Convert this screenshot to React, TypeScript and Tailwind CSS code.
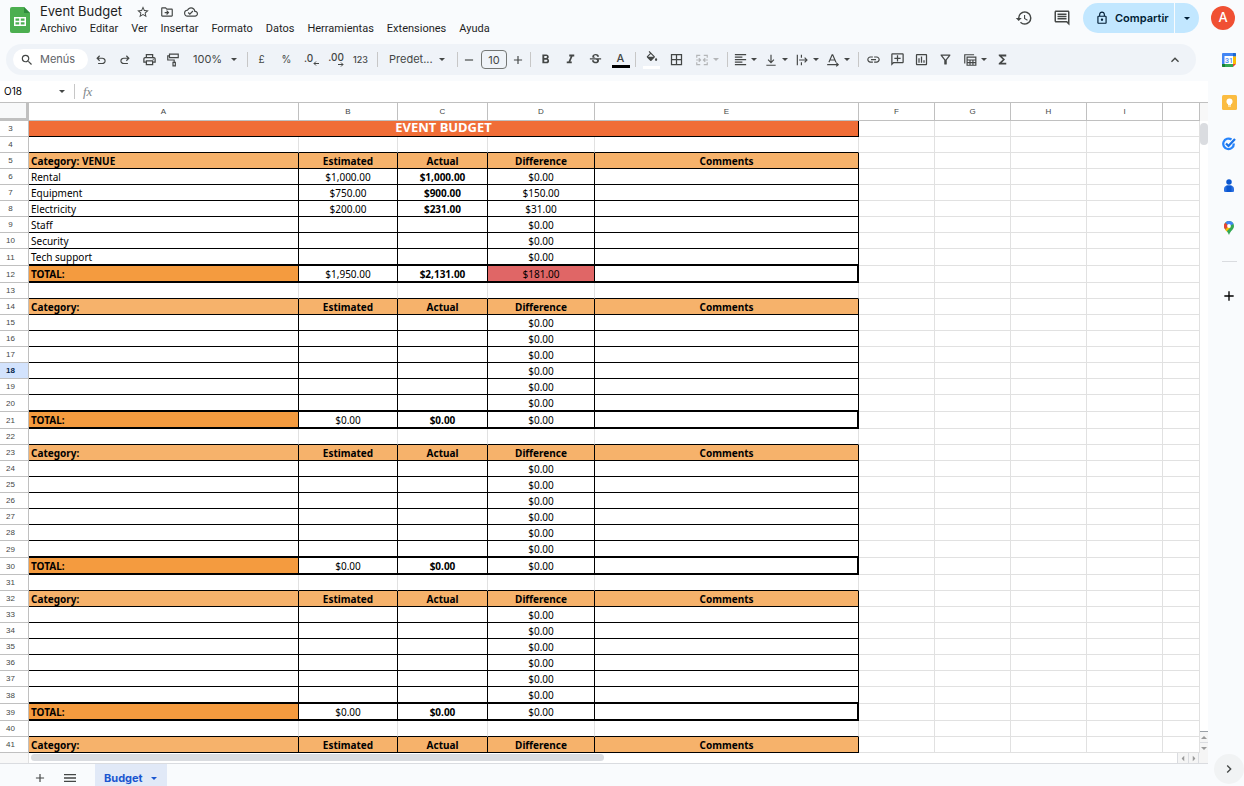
import React, { useState } from 'react';
import {
  MdStarBorder,
  MdOutlineDriveFileMove,
  MdOutlineCloudDone,
  MdSearch,
  MdOutlinePrint,
  MdStrikethroughS,
  MdFormatBold,
  MdFormatItalic,
  MdBorderAll,
  MdFormatAlignLeft,
  MdLink,
  MdOutlineAddComment,
  MdOutlineInsertChart,
  MdOutlineFilterAlt,
  MdFunctions,
  MdKeyboardArrowUp,
  MdHistory,
  MdOutlineComment,
  MdOutlineLock,
  MdAdd,
  MdRemove,
  MdMenu,
  MdChevronRight,
} from 'react-icons/md';

type SheetRow = {
  num: number;
  kind: 'title' | 'blank' | 'header' | 'item' | 'lastItem' | 'total';
  label?: string;
  estimated?: string;
  actual?: string;
  difference?: string;
};

const MENUS = ['Archivo', 'Editar', 'Ver', 'Insertar', 'Formato', 'Datos', 'Herramientas', 'Extensiones', 'Ayuda'];
const COLUMNS = ['A', 'B', 'C', 'D', 'E', 'F', 'G', 'H', 'I', ''];

const VENUE = [
  { label: 'Rental', estimated: '$1,000.00', actual: '$1,000.00', difference: '$0.00' },
  { label: 'Equipment', estimated: '$750.00', actual: '$900.00', difference: '$150.00' },
  { label: 'Electricity', estimated: '$200.00', actual: '$231.00', difference: '$31.00' },
  { label: 'Staff', difference: '$0.00' },
  { label: 'Security', difference: '$0.00' },
  { label: 'Tech support', difference: '$0.00' },
];
const EMPTY_ITEMS = Array.from({ length: 6 }, () => ({ difference: '$0.00' }));

const buildSection = (start: number, label: string, items: Partial<SheetRow>[], total: Partial<SheetRow>): SheetRow[] => [
  { num: start, kind: 'header', label },
  ...items.map((item, i) => ({
    ...item,
    num: start + 1 + i,
    kind: (i === items.length - 1 ? 'lastItem' : 'item') as SheetRow['kind'],
  })),
  { ...total, num: start + 7, kind: 'total', label: 'TOTAL:' },
  { num: start + 8, kind: 'blank' },
];

const ZERO_TOTAL = { estimated: '$0.00', actual: '$0.00', difference: '$0.00' };

const ROWS: SheetRow[] = [
  { num: 3, kind: 'title' },
  { num: 4, kind: 'blank' },
  ...buildSection(5, 'Category: VENUE', VENUE, { estimated: '$1,950.00', actual: '$2,131.00', difference: '$181.00' }),
  ...buildSection(14, 'Category:', EMPTY_ITEMS, ZERO_TOTAL),
  ...buildSection(23, 'Category:', EMPTY_ITEMS, ZERO_TOTAL),
  ...buildSection(32, 'Category:', EMPTY_ITEMS, ZERO_TOTAL),
  { num: 41, kind: 'header', label: 'Category:' },
];

const Caret = ({ className = '' }: { className?: string }) => (
  <svg className={`h-[3px] w-1.5 shrink-0 ${className}`} viewBox="0 0 6 3" fill="currentColor">
    <path d="M0 0h6L3 3z" />
  </svg>
);

const Symbol = ({ d, className = 'size-3.5' }: { d: string; className?: string }) => (
  <svg className={className} viewBox="0 -960 960 960" fill="currentColor">
    <path d={d} />
  </svg>
);

const UNDO = 'M280-200v-80h284q63 0 109.5-40T720-420q0-60-46.5-100T564-560H312l104 104-56 56-200-200 200-200 56 56-104 104h252q97 0 166.5 63T800-420q0 94-69.5 157T564-200H280Z';
const REDO = 'M396-200q-97 0-166.5-63T160-420q0-94 69.5-157T396-640h252L544-744l56-56 200 200-200 200-56-56 104-104H396q-63 0-109.5 40T240-420q0 60 46.5 100T396-280h284v80H396Z';

const Line = ({ children, className = 'size-3.5' }: { children: React.ReactNode; className?: string }) => (
  <svg className={className} viewBox="0 0 24 24" fill="none" stroke="currentColor" strokeWidth="2">
    {children}
  </svg>
);

const PaintIcon = () => (
  <Line>
    <path d="M6 2h15v6H6zM6 5H3v7h11v4M12 16h4v6h-4z" />
  </Line>
);

const FillIcon = () => (
  <svg className="size-3.5" viewBox="0 0 24 24" fill="currentColor">
    <path d="M16.560 8.940L7.620 0 6.210 1.410l2.380 2.380-5.150 5.150a1.490 1.490 0 0 0 0 2.120l5.500 5.500c.29.29.68.44 1.060.44s.77-.15 1.060-.44l5.500-5.500c.59-.58.59-1.530 0-2.120zM5.210 10L10 5.210 14.790 10zM19 11.500s-2 2.170-2 3.500a2 2 0 0 0 4 0c0-1.330-2-3.500-2-3.500z" />
  </svg>
);

const MergeIcon = () => (
  <Line>
    <path d="M3 8V4h6M15 4h6v4M3 16v4h6M15 20h6v-4M2 12h7M6.500 9l3 3-3 3M22 12h-7M17.500 9l-3 3 3 3" />
  </Line>
);

const AlignBottomIcon = () => (
  <Line>
    <path d="M12 3v13M7 11.500l5 5 5-5M4 21h16" />
  </Line>
);

const WrapIcon = () => (
  <Line>
    <path d="M4 3v18M11 3v5M11 16v5M7 12h13M16.500 8l4 4-4 4" />
  </Line>
);

const RotateIcon = () => (
  <Line>
    <path d="M5 16L10.500 3h1L17 16M7 12h8M2 20h18M17.500 16.500L21 20l-3.500 3" />
  </Line>
);

const TableIcon = () => (
  <Line>
    <path d="M3 18V3h16M7 7h15v14H7zM7 12h15M12 12v9M17 12v9M7 16.500h15" />
  </Line>
);

const Divider = ({ className }: { className: string }) => <span className={`h-[15px] w-px shrink-0 bg-[#c7c7c7] ${className}`} />;

interface ToolProps {
  label: string;
  className?: string;
  children: React.ReactNode;
}

const Tool: React.FC<ToolProps> = ({ label, className = 'w-6', children }) => (
  <button aria-label={label} className={`flex h-6 shrink-0 items-center justify-center rounded hover:bg-black/5 ${className}`}>
    {children}
  </button>
);

const DropTool: React.FC<ToolProps> = ({ label, className = '', children }) => (
  <button aria-label={label} className={`flex h-6 w-[31px] shrink-0 items-center gap-[3px] pl-1 hover:bg-black/5 ${className}`}>
    <span className="flex w-4 justify-center">{children}</span>
    <Caret />
  </button>
);

const SheetsLogo = () => (
  <svg className="h-[26px] w-5" viewBox="0 0 20 26">
    <path d="M2 0h12l6 6v18a2 2 0 0 1-2 2H2a2 2 0 0 1-2-2V2a2 2 0 0 1 2-2z" fill="#4caf50" />
    <path d="M14 0l6 6h-6z" fill="#2e8b3c" />
    <path d="M4 10h12v9H4zM5.500 11.500v2.200h3.700v-2.200zM10.800 11.500v2.200h3.700v-2.200zM5.500 15.300v2.200h3.700v-2.200zM10.800 15.300v2.200h3.700v-2.200z" fill="#fff" fillRule="evenodd" />
  </svg>
);

const CalendarIcon = () => (
  <svg className="size-3.5" viewBox="0 0 28 28">
    <path d="M2 0h24a2 2 0 0 1 2 2v5H6v15H0V2a2 2 0 0 1 2-2z" fill="#4285f4" />
    <path d="M22 0h4a2 2 0 0 1 2 2v5h-6z" fill="#1967d2" />
    <path d="M22 7h6v15h-6z" fill="#fbbc04" />
    <path d="M0 22h22v6H2a2 2 0 0 1-2-2z" fill="#34a853" />
    <path d="M0 22h6v6H2a2 2 0 0 1-2-2z" fill="#188038" />
    <path d="M22 22h6l-6 6z" fill="#ea4335" />
    <path d="M5 6h17v16H5z" fill="#fff" />
    <text x="14" y="19" textAnchor="middle" fontSize="14" fontFamily="Roboto, sans-serif" fontWeight="500" fill="#4285f4">31</text>
  </svg>
);

const KeepIcon = () => (
  <svg className="size-[15px]" viewBox="0 0 30 30">
    <rect width="30" height="30" rx="3" fill="#fbbc41" />
    <circle cx="15" cy="13" r="6" fill="#fff" />
    <path d="M12 17h6v3h-6zM12 21h6v2h-6z" fill="#fff" />
  </svg>
);

const TasksIcon = () => (
  <svg className="size-3.5" viewBox="0 0 28 28" fill="none">
    <path d="M19 5a10.500 10.500 0 1 0 4.500 8" stroke="#2684fc" strokeWidth="4.500" />
    <path d="M8 13l5 5L26 4" stroke="#1a73e8" strokeWidth="4.500" />
  </svg>
);

const ContactsIcon = () => (
  <svg className="h-3.5 w-3" viewBox="0 0 24 28">
    <circle cx="12" cy="6" r="5.500" fill="#0b57d0" />
    <path d="M2 20c0-4 3-7 7-7h6c4 0 7 3 7 7v3c0 2-1 3-3 3H5c-2 0-3-1-3-3z" fill="#2a6fe0" />
    <path d="M7 13h10v13H7z" fill="#0b57d0" />
  </svg>
);

const MapsIcon = () => (
  <svg className="h-3.5 w-2.5" viewBox="0 0 20 28">
    <path d="M10 0C4.500 0 0 4.500 0 10c0 7 7 9 10 18 3-9 10-11 10-18 0-5.500-4.500-10-10-10z" fill="#34a853" />
    <path d="M10 0c4 0 7.500 2.300 9 6l-9 4-7.500-6.500C4.500 1.300 7 0 10 0z" fill="#4285f4" />
    <path d="M2.500 3.500L10 10l-7.500 7C1 15 0 13 0 10c0-2.500 1-4.800 2.500-6.500z" fill="#ea4335" />
    <path d="M2.500 17L10 10l3 3-8 8c-1-1.500-1.800-2.500-2.500-4z" fill="#fbbc04" />
    <circle cx="10" cy="10" r="3.800" fill="#fff" />
  </svg>
);

const Header = () => (
  <header className="flex h-11 shrink-0 justify-between">
    <div className="flex">
      <div className="pl-2.5 pt-[7px]">
        <SheetsLogo />
      </div>
      <div className="pl-2.5 pt-[3px]">
        <div className="flex h-[18px] items-center">
          <h1 className="text-[13px] text-[#1f1f1f]">Event Budget</h1>
          <div className="ml-3.5 flex gap-2.5">
            <button aria-label="Destacar"><MdStarBorder className="size-3.5" /></button>
            <button aria-label="Mover"><MdOutlineDriveFileMove className="size-3.5" /></button>
            <button aria-label="Estado del documento"><MdOutlineCloudDone className="size-3.5" /></button>
          </div>
        </div>
        <nav className="flex h-[17px] items-center gap-[13px] font-['Roboto',sans-serif] text-[11px] text-[#1f1f1f]">
          {MENUS.map(menu => <button key={menu}>{menu}</button>)}
        </nav>
      </div>
    </div>
    <div className="flex h-9 items-center pr-[9px]">
      <button aria-label="Historial" className="mr-5"><MdHistory className="size-[18px]" /></button>
      <button aria-label="Comentarios" className="mr-3"><MdOutlineComment className="size-[18px]" /></button>
      <div className="mr-3 flex h-[30px] overflow-hidden rounded-full text-[#001d35]">
        <button className="flex w-[91px] items-center gap-1.5 bg-[#c2e7ff] pl-3 text-[11px] font-semibold">
          <MdOutlineLock className="size-3.5 shrink-0" />
          Compartir
        </button>
        <button aria-label="Opciones para compartir" className="ml-px flex w-6 items-center justify-center bg-[#c2e7ff]">
          <Caret />
        </button>
      </div>
      <button aria-label="Cuenta" className="size-6 rounded-full bg-[#f05033] text-[13px] font-medium text-white">A</button>
    </div>
  </header>
);

const Toolbar = () => (
  <div role="toolbar" className="ml-1.5 mr-3 flex h-[31px] shrink-0 items-center rounded-full bg-[#eff3f8] pl-[7px] text-[11px]">
    <label className="flex h-[21px] w-[75px] shrink-0 items-center gap-1.5 rounded-full bg-white pl-[7px]">
      <MdSearch className="size-3.5 shrink-0" />
      <input aria-label="Menús" placeholder="Menús" className="w-11 bg-transparent outline-none placeholder:text-[#5f6368]" />
    </label>
    <Tool label="Deshacer" className="ml-px w-6"><Symbol d={UNDO} /></Tool>
    <Tool label="Rehacer"><Symbol d={REDO} /></Tool>
    <Tool label="Imprimir"><MdOutlinePrint className="size-[15px]" /></Tool>
    <Tool label="Copiar formato"><PaintIcon /></Tool>
    <button className="flex h-6 w-14 shrink-0 items-center justify-between pl-2 pr-1">
      100%
      <Caret />
    </button>
    <Divider className="ml-1.5" />
    <Tool label="Formato de moneda" className="ml-px w-[25px] text-[10px]">£</Tool>
    <Tool label="Porcentaje" className="w-[25px] text-[10px]">%</Tool>
    <Tool label="Reducir decimales" className="w-[25px]">
      <span className="flex items-center text-[10px] font-medium leading-none">
        <span className="pb-1">.0</span>
        <svg className="mt-2 h-[5px] w-1.5" viewBox="0 0 6 5" fill="none" stroke="currentColor"><path d="M6 2.500H1M3 .5l-2 2 2 2" /></svg>
      </span>
    </Tool>
    <Tool label="Aumentar decimales" className="w-6">
      <span className="flex flex-col items-end text-[10px] font-medium leading-[9px]">
        .00
        <svg className="h-[5px] w-1.5" viewBox="0 0 6 5" fill="none" stroke="currentColor"><path d="M0 2.500h5M3 .5l2 2-2 2" /></svg>
      </span>
    </Tool>
    <Tool label="Más formatos" className="w-[25px] text-[9px] font-medium">123</Tool>
    <Divider className="ml-1" />
    <button className="flex h-6 w-[71px] shrink-0 items-center justify-between pl-[11px] pr-1">
      Predet...
      <Caret />
    </button>
    <Divider className="ml-2" />
    <Tool label="Reducir tamaño" className="w-[22px]"><MdRemove className="size-3.5" /></Tool>
    <input aria-label="Tamaño de fuente" defaultValue="10" className="ml-px h-[19px] w-[26px] shrink-0 rounded border border-[#747775] bg-transparent text-center outline-none" />
    <Tool label="Aumentar tamaño" className="w-[22px]"><MdAdd className="size-3.5" /></Tool>
    <Divider className="ml-px" />
    <Tool label="Negrita" className="ml-0.5 w-[25px]"><MdFormatBold className="size-[15px]" /></Tool>
    <Tool label="Cursiva" className="w-[25px]"><MdFormatItalic className="size-[15px]" /></Tool>
    <Tool label="Tachado" className="w-[25px]"><MdStrikethroughS className="size-[15px]" /></Tool>
    <Tool label="Color de texto" className="w-[25px]">
      <span className="flex w-[18px] flex-col border-b-[3px] border-black text-center font-medium leading-[13px]">A</span>
    </Tool>
    <Divider className="ml-0.5" />
    <Tool label="Color de relleno" className="ml-[3px] w-[25px]">
      <span className="flex h-[18px] w-[17px] justify-center border-b-[3px] border-white">
        <FillIcon />
      </span>
    </Tool>
    <Tool label="Bordes" className="w-[25px]"><MdBorderAll className="size-[15px]" /></Tool>
    <DropTool label="Combinar celdas" className="ml-px text-[#b4b6b8]"><MergeIcon /></DropTool>
    <Divider className="ml-1.5" />
    <DropTool label="Alineación horizontal"><MdFormatAlignLeft className="size-[15px]" /></DropTool>
    <DropTool label="Alineación vertical"><AlignBottomIcon /></DropTool>
    <DropTool label="Ajuste de texto"><WrapIcon /></DropTool>
    <DropTool label="Rotación de texto"><RotateIcon /></DropTool>
    <Divider className="ml-1.5" />
    <Tool label="Insertar enlace" className="ml-0.5 w-6"><MdLink className="size-[15px]" /></Tool>
    <Tool label="Insertar comentario"><MdOutlineAddComment className="size-[15px] -scale-x-100" /></Tool>
    <Tool label="Insertar gráfico"><MdOutlineInsertChart className="size-[15px]" /></Tool>
    <Tool label="Crear filtro" className="w-[25px]"><MdOutlineFilterAlt className="size-[15px]" /></Tool>
    <DropTool label="Vistas de tabla"><TableIcon /></DropTool>
    <Tool label="Funciones" className="ml-px w-6"><MdFunctions className="size-[15px]" /></Tool>
    <Tool label="Ocultar menús" className="ml-auto mr-[9px] w-6"><MdKeyboardArrowUp className="size-4" /></Tool>
  </div>
);

const FormulaBar = () => (
  <div className="mt-1.5 flex h-[21px] shrink-0 items-center bg-white">
    <input aria-label="Cuadro de nombres" defaultValue="O18" className="w-[54px] bg-transparent pl-1 text-[10px] text-black outline-none" />
    <button aria-label="Rangos" className="ml-[5px]"><Caret /></button>
    <Divider className="ml-[9px] h-3" />
    <span className="ml-2 font-['Liberation_Serif',serif] text-[13px] italic leading-none text-[#80868b]">fx</span>
    <input aria-label="Fórmula" className="ml-2 min-w-0 flex-1 outline-none" />
  </div>
);

const HEADER_CELL = 'border-r border-b border-black bg-[#f6b26b] pt-0.5 font-bold leading-[13px]';

const SheetRowView = ({ row, selected }: { row: SheetRow; selected: boolean }) => {
  const { kind } = row;
  const thick = kind === 'lastItem' || kind === 'total';
  const base = `border-black pt-0.5 leading-[13px] ${thick ? 'border-b-2' : 'border-b'}`;
  const cell = `border-r text-center ${base}`;

  return (
    <tr>
      <th className={`border-r border-b border-[#c0c0c0] pr-[7px] text-center font-['Liberation_Sans',sans-serif] text-[8px] ${selected ? 'bg-[#d3e3fd] font-bold text-[#041e49]' : 'bg-white font-normal text-[#444746]'}`}>
        {row.num}
      </th>
      {kind === 'title' && (
        <td colSpan={5} className="border-r border-b border-black bg-[#f06d37] pb-0.5 text-center text-[13px] font-bold leading-[13px] text-white">EVENT BUDGET</td>
      )}
      {kind === 'blank' && [1, 2, 3, 4, 5].map(i => <td key={i} className="border-r border-b border-r-[#e1e1e1] border-b-black" />)}
      {kind === 'header' && (
        <>
          <td className={`${HEADER_CELL} pl-0.5`}>{row.label}</td>
          {['Estimated', 'Actual', 'Difference', 'Comments'].map(name => (
            <td key={name} className={`${HEADER_CELL} text-center`}>{name}</td>
          ))}
        </>
      )}
      {(kind === 'item' || thick) && (
        <>
          <td className={`border-r pl-0.5 ${base} ${kind === 'total' ? 'bg-[#f49b3f] font-bold' : ''}`}>{row.label}</td>
          <td className={cell}>{row.estimated}</td>
          <td className={`${cell} font-bold`}>{row.actual}</td>
          <td className={`${cell} ${row.difference === '$181.00' ? 'bg-[#e06666]' : ''}`}>{row.difference}</td>
          <td className={`${base} ${kind === 'total' ? 'border-r-2' : 'border-r'}`} />
        </>
      )}
      {[1, 2, 3, 4, 5].map(i => <td key={i} className="border-r border-b border-[#e1e1e1]" />)}
    </tr>
  );
};

const Sheet = () => (
  <div className="flex min-h-0 flex-1 border-t border-[#c0c0c0] bg-white">
    <div className="min-w-0 flex-1 overflow-hidden">
      <table className="w-full table-fixed border-separate border-spacing-0 font-['Noto_Sans',sans-serif] text-[10px] leading-[15px] text-black">
        <colgroup>
          <col className="w-[29px]" />
          <col className="w-[270px]" />
          <col className="w-[99px]" />
          <col className="w-[90px]" />
          <col className="w-[107px]" />
          <col className="w-[264px]" />
          <col className="w-[76px]" />
          <col className="w-[76px]" />
          <col className="w-[76px]" />
          <col className="w-[76px]" />
          <col />
        </colgroup>
        <thead>
          <tr className="h-[18px] font-['Liberation_Sans',sans-serif] text-[8px] text-[#444746]">
            <th className="border-r-[3px] border-b-[3px] border-[#c0c0c0] bg-[#f8f9fa]" />
            {COLUMNS.map((col, i) => <th key={i} className="border-r border-b border-[#c0c0c0] font-normal">{col}</th>)}
          </tr>
        </thead>
        <tbody>
          {ROWS.map(row => <SheetRowView key={row.num} row={row} selected={row.num === 18} />)}
        </tbody>
      </table>
    </div>
    <div className="flex w-2 flex-col justify-between">
      <div>
        <div className="h-[18px] bg-[#f8f8f8]" />
        <div className="mt-0.5 h-[22px] rounded-full bg-[#dadce0]" />
      </div>
      <div className="border-t border-[#9aa0a6] text-[#9a9a9a]">
        <button aria-label="Subir" className="flex h-2.5 w-2 items-center justify-center bg-[#f5f5f5]"><Caret className="w-1 rotate-180" /></button>
        <button aria-label="Bajar" className="flex h-[11px] w-2 items-center justify-center border-t border-[#dadce0] bg-[#f5f5f5]"><Caret className="w-1" /></button>
      </div>
    </div>
  </div>
);

const HorizontalScroll = () => (
  <div className="flex h-[11px] shrink-0 border-b border-[#dadce0] bg-white">
    <div className="w-[29px] border-r border-[#e1e1e1] bg-[#f8f8f8]" />
    <div className="flex-1 pl-0.5 pt-px">
      <div className="h-[7px] w-1/2 rounded-full bg-[#dadce0]" />
    </div>
    <div className="flex bg-[#f5f5f5] text-[#9a9a9a]">
      <button aria-label="Izquierda" className="flex w-[11px] items-center justify-center border-l border-[#dadce0]"><Caret className="w-1 rotate-90" /></button>
      <button aria-label="Derecha" className="flex w-[11px] items-center justify-center border-x border-[#dadce0]"><Caret className="w-1 -rotate-90" /></button>
      <div className="w-[9px]" />
    </div>
  </div>
);

const SheetTabs = () => {
  const [active, setActive] = useState('Budget');

  return (
    <footer className="flex h-[22px] shrink-0 overflow-hidden pl-7">
      <button aria-label="Añadir hoja" className="flex h-7 w-6 items-center justify-center"><MdAdd className="size-3.5" /></button>
      <button aria-label="Todas las hojas" className="ml-1.5 flex h-7 w-6 items-center justify-center"><MdMenu className="size-4" /></button>
      <button
        onClick={() => setActive('Budget')}
        className={`ml-[13px] flex h-7 w-[72px] items-center gap-2 pl-[9px] text-[11px] font-bold ${active === 'Budget' ? 'bg-[#e1e9f7] text-[#1a56d0]' : ''}`}
      >
        Budget
        <Caret />
      </button>
    </footer>
  );
};

const SidePanel = () => (
  <aside className="flex w-9 shrink-0 flex-col items-center">
    <div className="flex flex-col gap-2.5 pl-1.5">
      <button aria-label="Calendar" className="flex h-8 w-9 items-center justify-center"><CalendarIcon /></button>
      <button aria-label="Keep" className="flex h-8 w-9 items-center justify-center"><KeepIcon /></button>
      <button aria-label="Tasks" className="flex h-8 w-9 items-center justify-center"><TasksIcon /></button>
      <button aria-label="Contactos" className="flex h-8 w-9 items-center justify-center"><ContactsIcon /></button>
      <button aria-label="Maps" className="flex h-8 w-9 items-center justify-center"><MapsIcon /></button>
    </div>
    <hr className="ml-1.5 mt-[17px] w-[15px] border-[#dadce0]" />
    <button aria-label="Complementos" className="ml-1.5 mt-[18px] flex h-8 w-9 items-center justify-center text-black"><MdAdd className="size-4" /></button>
    <button aria-label="Mostrar panel" className="mb-0.5 ml-1.5 mt-auto flex size-[30px] items-center justify-center rounded-full bg-[#f1f3f4]">
      <MdChevronRight className="size-4" />
    </button>
  </aside>
);

const App: React.FC = () => {
  return (
    <div className="flex h-screen flex-col overflow-hidden bg-[#f9fbfd] font-['Inter',sans-serif] text-[#444746]">
      <Header />
      <div className="flex min-h-0 flex-1">
        <main className="flex min-w-0 flex-1 flex-col">
          <Toolbar />
          <FormulaBar />
          <Sheet />
          <HorizontalScroll />
          <SheetTabs />
        </main>
        <SidePanel />
      </div>
    </div>
  );
};

export default App;
